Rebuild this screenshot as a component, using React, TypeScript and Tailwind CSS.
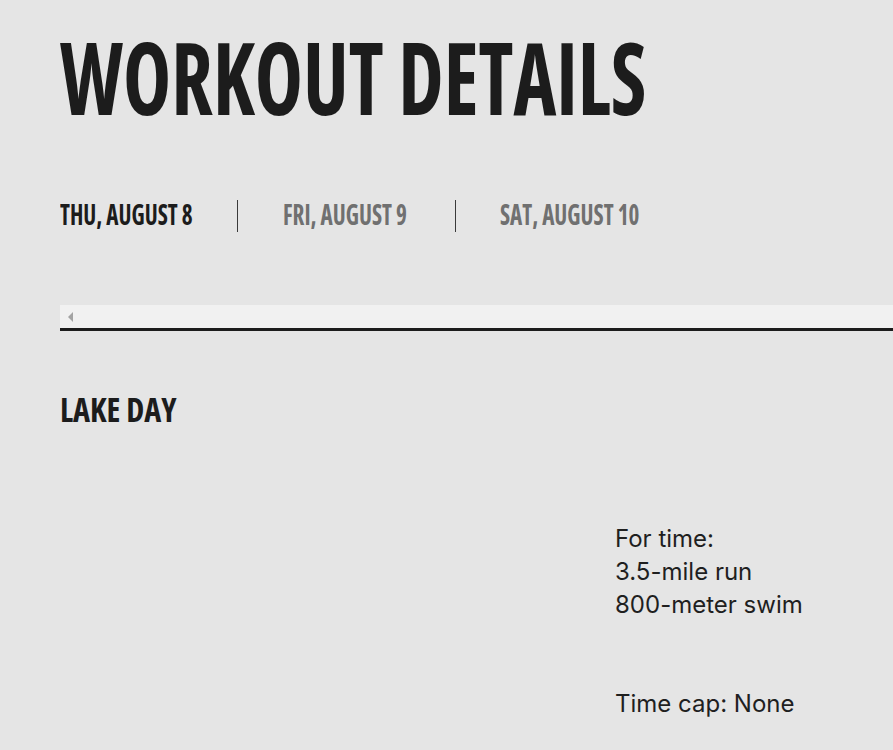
const days = [
  { label: 'THU, AUGUST 8', active: true, box: 'w-[177px]' },
  { label: 'FRI, AUGUST 9', active: false, box: 'w-[218px] border-l border-[#3a3a3a] pl-[45px]' },
  { label: 'SAT, AUGUST 10', active: false, box: 'border-l border-[#3a3a3a] pl-[44px]' },
];

const condensed = "font-['Open_Sans',sans-serif] [font-stretch:75%] font-bold uppercase";

export default function App() {
  return (
    <div className="min-h-screen overflow-hidden bg-[#e5e5e5] pl-[60px] font-['Inter',sans-serif] text-[#1c1c1c]">
      {/* Page title */}
      <h1 className={`${condensed} pt-[26px] text-[101px] leading-none whitespace-nowrap`}>
        <span className="inline-block origin-left scale-x-[0.806]">Workout Details</span>
      </h1>

      {/* Day tabs, scrollable strip */}
      <div className="mt-[73px] border-b-[3px] border-[#1c1c1c]">
        <div className="flex h-[32px] items-stretch">
          {days.map((d) => (
            <div key={d.label} className={`${d.box} shrink-0`}>
              <span
                className={`${condensed} inline-block origin-left scale-x-[0.825] whitespace-nowrap text-[28px] leading-[28px] ${
                  d.active ? 'text-[#1c1c1c]' : 'text-[#707070]'
                }`}
              >
                {d.label}
              </span>
            </div>
          ))}
        </div>
        <div className="mt-[73px] flex h-[23px] items-center bg-[#f1f1f1] pl-[8px]">
          <div className="h-0 w-0 border-y-[5px] border-r-[5px] border-y-transparent border-r-[#a3a3a3]" />
        </div>
      </div>

      {/* Workout */}
      <h2 className={`${condensed} mt-[58px] text-[34px] leading-[40px] whitespace-nowrap`}>
        <span className="inline-block origin-left scale-x-[0.95]">Lake Day</span>
      </h2>

      <div className="mt-[93px] flex">
        <div className="w-[555px] shrink-0" />
        <div className="text-[24px] leading-[33px] text-[#1f1f1f]">
          <p>
            For time:
            <br />
            3.5-mile run
            <br />
            800-meter swim
          </p>
          <p className="mt-[66px]">Time cap: None</p>
        </div>
      </div>
    </div>
  );
}
